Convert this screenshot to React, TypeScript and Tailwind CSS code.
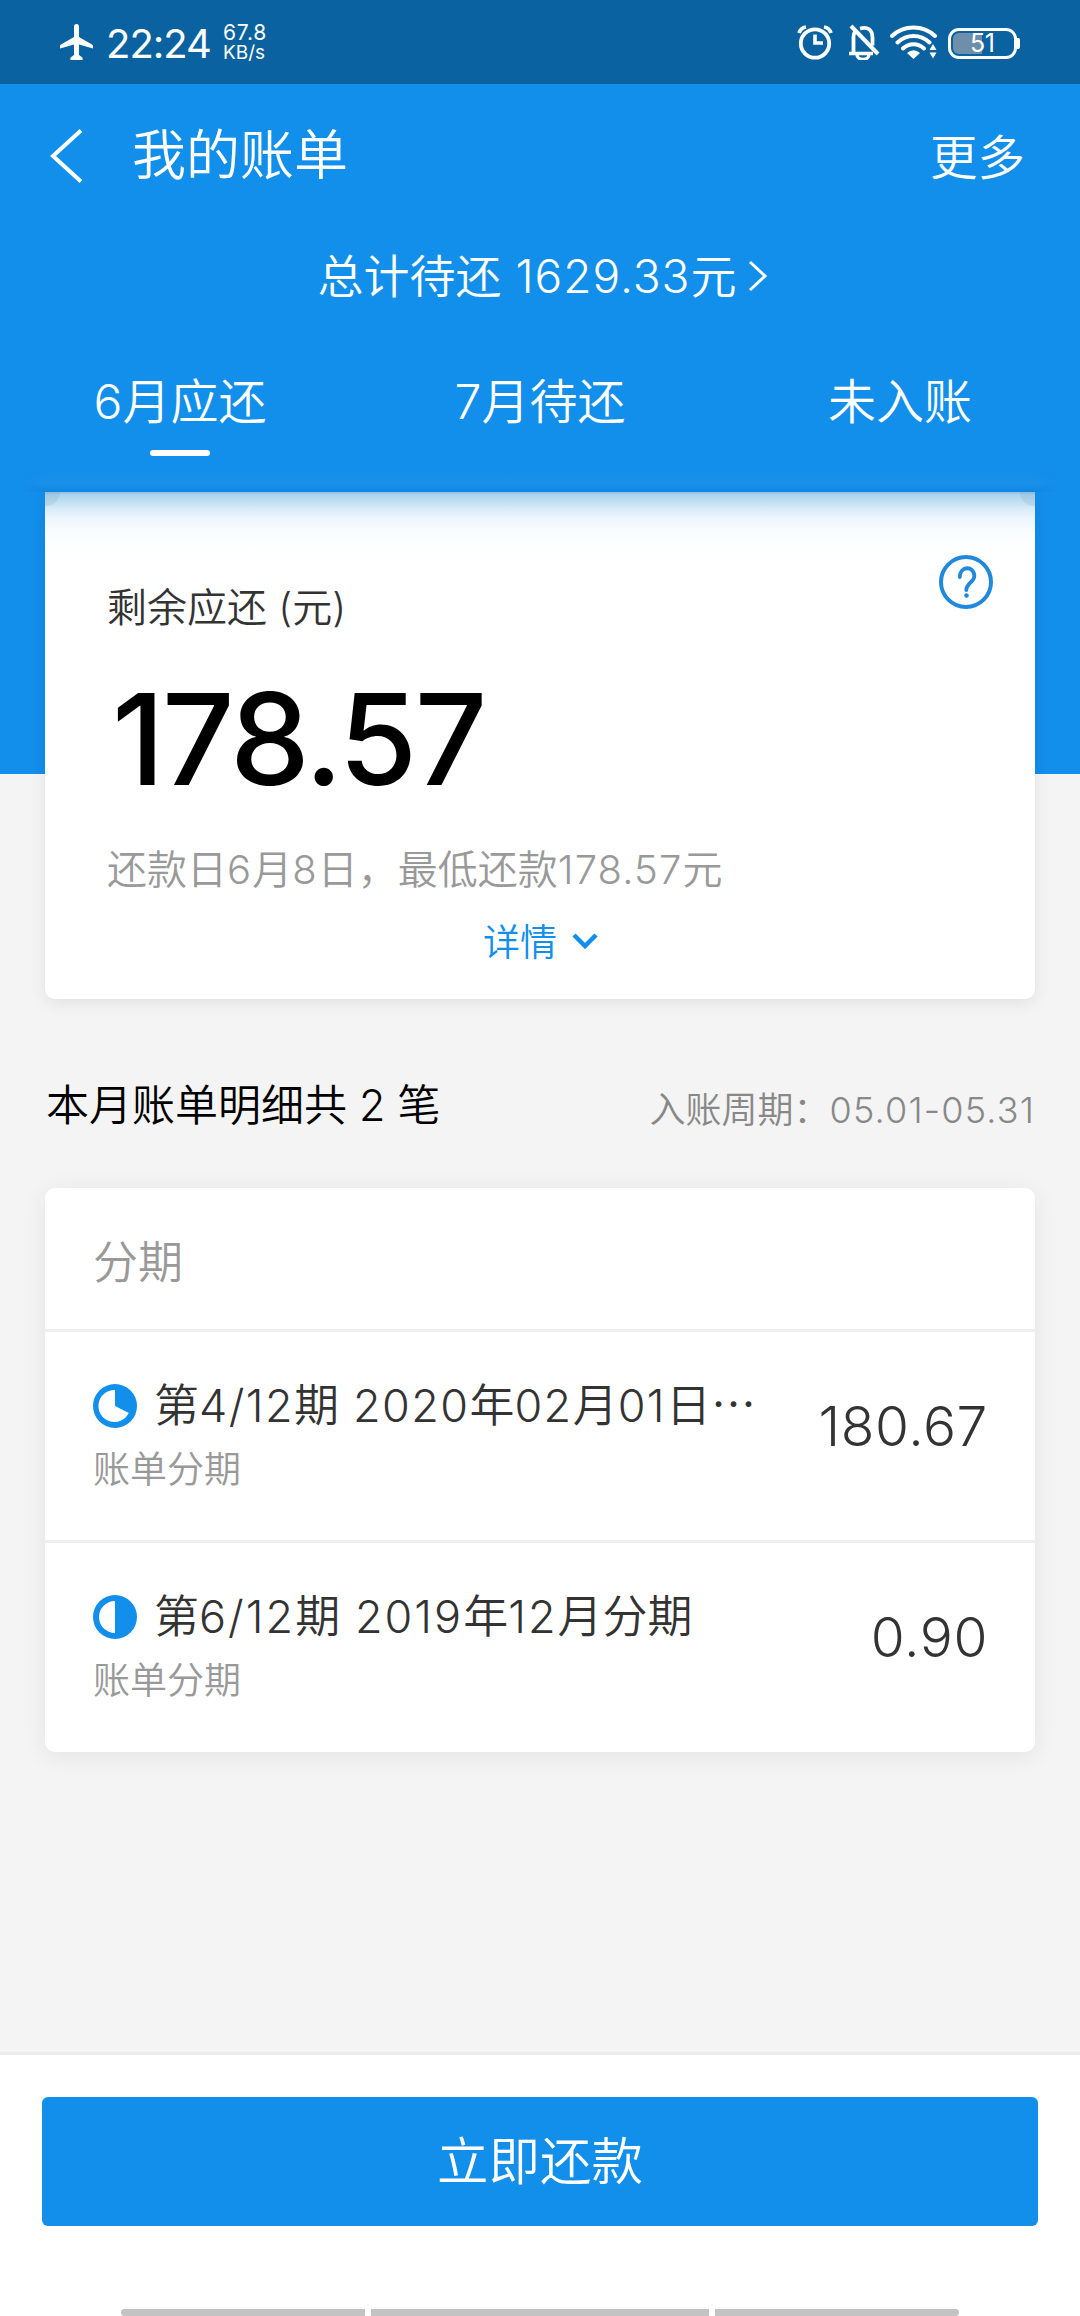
interface Installment {
  title: string;
  type: string;
  amount: string;
  progress: "third" | "half";
  tracking: string;
}

const tabs = ["6月应还", "7月待还", "未入账"];

const installments: Installment[] = [
  { title: "第4/12期 2020年02月01日⋯", type: "账单分期", amount: "180.67", progress: "third", tracking: "tracking-[0.031em]" },
  { title: "第6/12期 2019年12月分期", type: "账单分期", amount: "0.90", progress: "half", tracking: "tracking-[0.045em]" },
];

// Digits sit a little looser than the Chinese characters around them
function MixedText({ text, tracking = "tracking-[0.025em]" }: { text: string; tracking?: string }) {
  return (
    <>
      {text.split(/([\d./\- ]+)/).map((part, i) =>
        i % 2 === 1 ? (
          <span key={i} className={tracking}>
            {part}
          </span>
        ) : (
          part
        )
      )}
    </>
  );
}

function StatusBar() {
  return (
    <div className="flex h-[84px] shrink-0 items-start bg-[#0b62a0] font-normal text-white">
      <svg className="mt-6 ml-[60px] h-9 w-[33px]" viewBox="0 0 33 36" fill="currentColor">
        <path d="M14 3a2.5 3 0 0 1 5 0v10l13 7.6q1 .6 1 1.700v2.200L19 20.500V31l3.600 2.800V36H10.400v-2.200L14 31V20.500L0 24.500v-2.200q0-1.100 1-1.700L14 13z" />
      </svg>
      <span className="mt-[24px] ml-[13px] w-[105px] text-[40px] leading-[40px] tracking-[-1px] whitespace-nowrap">22:24</span>
      <div className="mt-[23px] ml-[12px] flex flex-col whitespace-nowrap">
        <span className="text-[21px] leading-[20px] tracking-[0.8px]">67.8</span>
        <span className="text-[19px] leading-[20px]">KB/s</span>
      </div>
      <div className="mt-6 mr-[60px] ml-auto flex">
        <svg className="h-9 w-9" viewBox="0 0 36 36" fill="none" stroke="currentColor">
          <circle cx="18" cy="19.500" r="14.200" strokeWidth="3.800" />
          <path d="M18 10.500V19h8" strokeWidth="3.600" />
          <path d="M2 9A9 9 0 0 1 9 3M34 9A9 9 0 0 0 27 3" strokeWidth="3.800" />
        </svg>
        <svg className="ml-[15px] h-9 w-8" viewBox="0 0 32 36" fill="none" stroke="currentColor">
          <path d="M5.500 29V13a10 10 0 0 1 2-6M12 4.500q12-3 12.500 9v8" strokeWidth="3.800" />
          <path d="M1 29.500h24M9 30.500a6 5 0 0 0 12 0" strokeWidth="3.400" />
          <path d="M3 2l27 28" strokeWidth="4" />
        </svg>
        <svg className="ml-[10px] h-9 w-[48px]" viewBox="0 0 48 36" fill="none" stroke="currentColor">
          <path
            d="M2 12Q11 3.500 23.500 3.500T45 12M7.500 18.500q7-6.500 16-6.500T39.500 18.500M13 24.500q4.500-4.200 10.500-4.200t10.500 4.200"
            strokeWidth="4"
            strokeLinecap="round"
          />
          <path d="M17 29q6.500-5.500 13 0L23.500 35z" fill="currentColor" stroke="none" />
          <path d="M39.500 26l3.500-6 3.500 6zM39.500 28.500l3.500 6 3.500-6z" fill="currentColor" stroke="none" />
        </svg>
        <div className="mt-[3px] ml-[10px] flex items-center">
          <div className="flex h-[31px] w-[69px] rounded-[11px] border-[3px] border-white p-[2px]">
            <div className="h-full w-[29px] rounded-l-[6px] bg-[#6e8fa9]" />
            <span className="-ml-[12px] text-[25px] leading-[21px] tracking-[-0.5px]">51</span>
          </div>
          <div className="h-[11px] w-[3px] rounded-r-[2px] bg-white" />
        </div>
      </div>
    </div>
  );
}

function ProgressIcon({ progress }: { progress: Installment["progress"] }) {
  return (
    <svg className="h-11 w-11" viewBox="0 0 44 44" fill="#128eeb">
      <circle cx="22" cy="22" r="22" />
      {progress === "third" ? (
        <path d="M22 22V6a16 16 0 1 0 13.800 23z" fill="#fff" />
      ) : (
        <path d="M22 6a16 16 0 0 0 0 32z" fill="#fff" />
      )}
    </svg>
  );
}

export default function App() {
  return (
    <div className="flex h-[2316px] w-[1080px] flex-col overflow-hidden bg-[#f4f4f4] font-[Inter,'Noto_Sans_CJK_SC',sans-serif] font-[350] text-[#333]">
      <StatusBar />

      <header className="h-[690px] shrink-0 bg-[#128eeb] text-white">
        <div className="flex h-[140px] items-center pr-[55px] pl-[50px]">
          <svg className="mt-[3px] h-[54px] w-8" viewBox="0 0 32 54" fill="none" stroke="currentColor" strokeWidth="4">
            <path d="M31 1.500L3 27l28 25.500" />
          </svg>
          <h1 className="mt-[4px] ml-[50px] text-[54px] leading-[60px]">我的账单</h1>
          <span className="mt-[8px] ml-auto text-[47.500px] leading-[60px]">更多</span>
        </div>
        <div className="flex h-[104px] items-center justify-center pl-[5px]">
          <span className="text-[46px] leading-[60px]">
            <MixedText text="总计待还 1629.33元" tracking="tracking-[0.022em]" />
          </span>
          <svg className="ml-[11px] h-8 w-5" viewBox="0 0 20 32" fill="none" stroke="currentColor" strokeWidth="3">
            <path d="M2 2l15 14L2 30" />
          </svg>
        </div>
        <nav className="grid h-[164px] grid-cols-3 pt-[44px]">
          {tabs.map((tab, i) => (
            <div key={tab} className="flex flex-col items-center">
              <span className="text-[48px] leading-[60px]">{tab}</span>
              {i === 0 && <div className="mt-[18px] h-[6px] w-[60px] rounded-full bg-white" />}
            </div>
          ))}
        </nav>
      </header>

      <section className="relative mx-[45px] -mt-[282px] h-[507px] shrink-0 rounded-b-[10px] bg-white shadow-[0_4px_16px_rgba(0,0,0,0.08)]">
        {/* shade cast by the tab bar over the top of the card */}
        <div className="absolute -inset-x-[20px] -top-[22px] h-[22px] bg-[linear-gradient(to_bottom,rgba(28,145,233,0),#1b91e9_13px,#0f86e0_22px)] [mask-image:linear-gradient(to_right,transparent,#000_20px,#000_calc(100%-20px),transparent)]" />
        <div className="absolute inset-x-0 top-0 h-[60px] bg-[linear-gradient(to_bottom,#8fc0ea_0px,#aed4ef_3px,#bcdff1_9px,#d9ebf8_17px,#edf6fd_26px,#f9fcff_40px,#fff_60px)]" />
        <div className="absolute top-0 left-0 h-[14px] w-[15px] rounded-br-[14px] bg-[#6d8fa5]/15" />
        <div className="absolute top-0 right-0 h-[14px] w-[15px] rounded-bl-[14px] bg-[#6d8fa5]/15" />

        <div className="relative px-[62px] pt-[92px]">
          <p className="text-[40px] leading-[48px]">剩余应还 (元)</p>
          <p className="mt-[43px] ml-[5px] text-[127px] leading-[128px] font-medium tracking-[-2.700px] text-black">178.57</p>
          <p className="mt-[43px] text-[40px] leading-[48px] text-[#999]">
            <MixedText text="还款日6月8日，最低还款178.57元" tracking="tracking-[0.028em]" />
          </p>
        </div>
        <div className="mt-[25px] flex items-center justify-center pl-px text-[#128eeb]">
          <span className="text-[37px] leading-[48px]">详情</span>
          <svg className="-mt-1 ml-[15px] h-4 w-[26px]" viewBox="0 0 26 16" fill="none" stroke="currentColor" strokeWidth="4.500">
            <path d="M2 2l11 11L24 2" />
          </svg>
        </div>
        <svg className="absolute top-[63px] right-[42px] h-[54px] w-[54px]" viewBox="0 0 54 54" fill="none" stroke="#2089dc" strokeWidth="4">
          <circle cx="27" cy="27" r="25" />
          <path d="M20.800 22c0-11.500 14.500-11.500 14.500-1 0 6-8 7.500-8 14" strokeLinecap="round" strokeWidth="3.800" />
          <circle cx="27.500" cy="40.500" r="2.300" fill="#2089dc" stroke="none" />
        </svg>
      </section>

      <div className="mx-[45px] mt-[74px] flex h-[64px] items-center justify-between whitespace-nowrap">
        <h2 className="ml-px text-[43px] leading-[60px] text-black">本月账单明细共 2 笔</h2>
        <span className="mt-[10px] text-[36px] leading-[60px] text-[#888]">
          <MixedText text="入账周期：05.01-05.31" tracking="tracking-[0.033em]" />
        </span>
      </div>

      <section className="mx-[45px] mt-[51px] h-[564px] shrink-0 rounded-[10px] bg-white shadow-[0_4px_24px_rgba(0,0,0,0.07)]">
        <div className="flex h-[141px] items-center px-[48px] pt-2 text-[45px] leading-[60px] text-[#999]">分期</div>
        {installments.map((item) => (
          <div key={item.title} className="flex h-[211px] items-start justify-between border-t-[3px] border-[#eee] pr-[47px] pl-[48px] pt-[44px]">
            <div className="flex flex-col">
              <div className="flex items-center">
                <ProgressIcon progress={item.progress} />
                <span className="ml-[17px] text-[45px] leading-[60px] whitespace-nowrap">
                  <MixedText text={item.title} tracking={item.tracking} />
                </span>
              </div>
              <span className="mt-[4px] text-[37px] leading-[60px] text-[#999]">{item.type}</span>
            </div>
            <span className="mt-[20px] text-[55px] leading-[60px] tracking-[0.600px]">{item.amount}</span>
          </div>
        ))}
      </section>

      <footer className="mt-auto flex h-[264px] shrink-0 flex-col items-center justify-between border-t-[3px] border-[#ececec] bg-white pt-[42px]">
        <button className="h-[129px] w-[996px] rounded-[6px] bg-[#128eeb] pb-[2px] text-[51.500px] leading-[60px] text-white">立即还款</button>
        <div className="flex gap-[6px]">
          <div className="h-[7px] w-[244px] rounded-l-[4px] bg-[#c3c3c3]" />
          <div className="h-[7px] w-[338px] bg-[#c3c3c3]" />
          <div className="h-[7px] w-[244px] rounded-r-[4px] bg-[#c3c3c3]" />
        </div>
      </footer>
    </div>
  );
}
